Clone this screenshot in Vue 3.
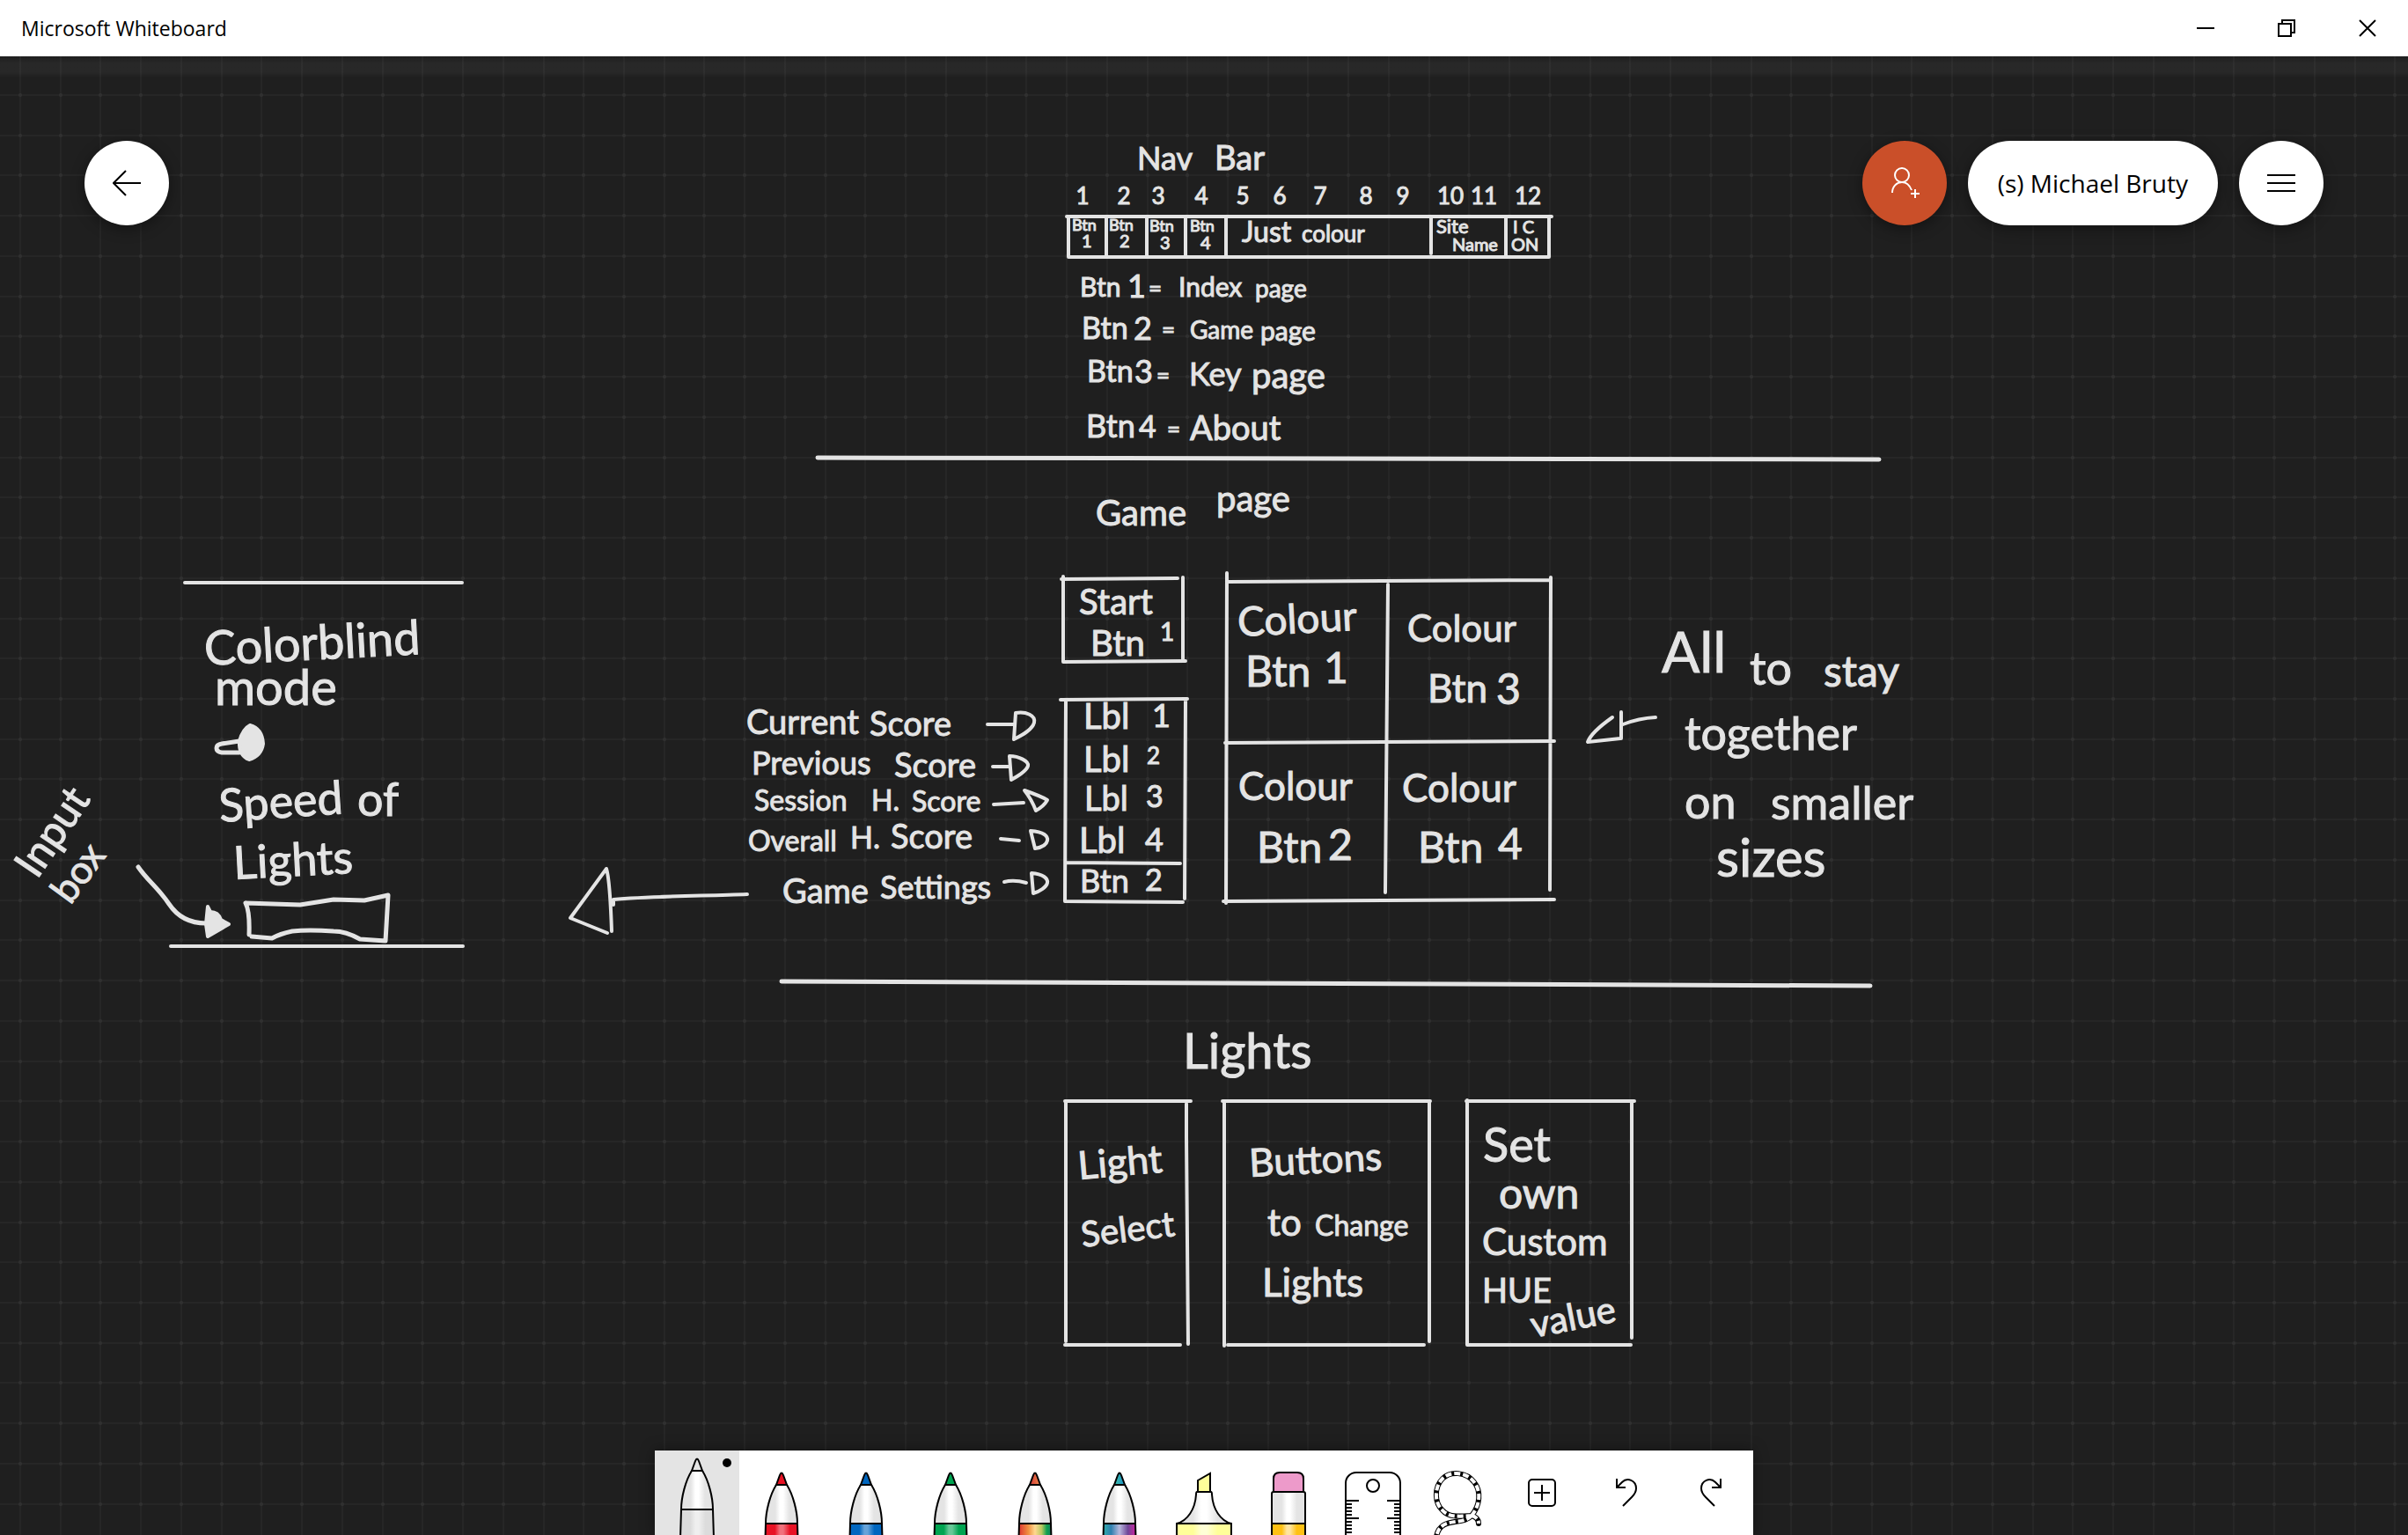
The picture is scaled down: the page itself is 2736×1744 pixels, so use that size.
<script setup>
// Background grid: 15 cells repeat every 686 units
const gridLines = Array.from({ length: 15 }, (_, i) => 11 + Math.round((i * 686) / 15))

// Ink words: [text, x, baseline, size, tilt]
const words = [
  ['Nav', 1292, 193, 36], ['Bar', 1380, 193, 38],
  ['Btn', 1218, 262, 18], ['1', 1229, 281, 20],
  ['Btn', 1260, 262, 18], ['2', 1272, 281, 20],
  ['Btn', 1306, 263, 18], ['3', 1318, 283, 20],
  ['Btn', 1352, 263, 18], ['4', 1364, 283, 20],
  ['Just', 1411, 275, 32], ['colour', 1479, 275, 26],
  ['Site', 1632, 265, 22], ['Name', 1650, 285, 20],
  ['I C', 1719, 265, 20], ['ON', 1717, 285, 20],

  ['Btn', 1227, 337, 30], ['1', 1281, 338, 36], ['=', 1305, 337, 26], ['Index', 1339, 337, 30], ['page', 1426, 338, 28],
  ['Btn', 1229, 385, 34], ['2', 1288, 386, 36], ['=', 1320, 384, 26], ['Game', 1352, 385, 28], ['page', 1432, 387, 30],
  ['Btn', 1235, 434, 34], ['3', 1289, 435, 36], ['=', 1314, 436, 26], ['Key', 1351, 438, 36], ['page', 1422, 441, 40],
  ['Btn', 1234, 497, 36], ['4', 1294, 497, 34], ['=', 1326, 497, 26], ['About', 1352, 500, 38],

  ['Game', 1245, 597, 40], ['page', 1382, 581, 40],

  ['Colorblind', 233, 756, 54, -3], ['mode', 244, 801, 56],
  ['Speed', 250, 934, 52, -4], ['of', 406, 927, 52],
  ['Lights', 266, 999, 52, -3],
  ['Input', 42, 1000, 48, -56], ['box', 80, 1029, 44, -54],

  ['Start', 1226, 698, 40], ['Btn', 1239, 745, 40], ['1', 1318, 728, 28],
  ['Lbl', 1231, 828, 40], ['1', 1309, 826, 36],
  ['Lbl', 1231, 877, 40], ['2', 1303, 868, 26],
  ['Lbl', 1232, 921, 38], ['3', 1302, 917, 34],
  ['Lbl', 1226, 969, 40], ['4', 1301, 967, 36],
  ['Btn', 1227, 1014, 36], ['2', 1301, 1012, 34],

  ['Current', 848, 834, 38], ['Score', 988, 836, 38],
  ['Previous', 854, 880, 36], ['Score', 1016, 883, 38],
  ['Session', 857, 921, 32], ['H.', 990, 921, 32], ['Score', 1036, 922, 32],
  ['Overall', 850, 967, 32], ['H.', 966, 964, 34], ['Score', 1012, 964, 38],
  ['Game', 889, 1026, 38], ['Settings', 1000, 1021, 36],

  ['Colour', 1407, 723, 46, -3], ['Btn', 1415, 780, 48], ['1', 1504, 776, 48],
  ['Colour', 1599, 729, 42], ['Btn', 1622, 798, 44], ['3', 1700, 800, 48],
  ['Colour', 1407, 909, 44], ['Btn', 1428, 980, 48], ['2', 1509, 977, 48],
  ['Colour', 1593, 911, 44], ['Btn', 1611, 980, 48], ['4', 1702, 976, 48],

  ['All', 1888, 764, 64], ['to', 1988, 778, 52], ['stay', 2072, 780, 48],
  ['together', 1914, 852, 52],
  ['on', 1914, 930, 52], ['smaller', 2012, 931, 52],
  ['sizes', 1950, 996, 60],

  ['Lights', 1344, 1214, 56],
  ['Light', 1226, 1340, 44, -5], ['Select', 1230, 1417, 40, -7],
  ['Buttons', 1420, 1337, 44, -3],
  ['to', 1440, 1404, 42], ['Change', 1494, 1404, 32],
  ['Lights', 1434, 1473, 44],
  ['Set', 1685, 1320, 54], ['own', 1703, 1373, 48],
  ['Custom', 1684, 1426, 42], ['HUE', 1684, 1480, 38],
  ['value', 1742, 1520, 42, -11]
]

const columns = [1230, 1277, 1316, 1365, 1412, 1454, 1500, 1552, 1594, 1648, 1686, 1736]

const pens = [
  { name: 'Black pen', top: 9, tip: '#e4e4e4', body: 'url(#body-grey)' },
  { name: 'Red pen', top: 25, tip: '#e81224', body: 'url(#body-red)' },
  { name: 'Blue pen', top: 25, tip: '#0066bf', body: 'url(#body-blue)' },
  { name: 'Green pen', top: 25, tip: '#00a451', body: 'url(#body-green)' },
  { name: 'Rainbow pen', top: 25, tip: 'url(#tip-rainbow)', body: 'url(#body-rainbow)' },
  { name: 'Galaxy pen', top: 25, tip: 'url(#tip-galaxy)', body: 'url(#body-galaxy)' }
]

const barrels = [
  { id: 'body-grey', edge: '#dcdcdc', mid: '#efefef' },
  { id: 'body-red', edge: '#e81224', mid: '#f1717c' },
  { id: 'body-blue', edge: '#0066bf', mid: '#66a3d9' },
  { id: 'body-green', edge: '#00a451', mid: '#66c897' },
  { id: 'body-yellow', edge: '#ffff99', mid: '#ffffd6' },
  { id: 'body-orange', edge: '#ffc114', mid: '#ffe5a0' },
  { id: 'metal', edge: '#e4e4e4', mid: '#ffffff' }
]

const ticks = [57, 61, 65, 69, 73, 77, 81, 85, 89, 93]
const tickLength = (y) => ((y - 57) % 20 === 0 ? 14 : 6)
</script>

<template>
  <div class="app">
    <header class="titlebar">
      <h1 class="title">Microsoft Whiteboard</h1>
      <div class="window-controls">
        <button type="button" class="window-button" aria-label="Minimize">
          <svg width="20" height="20" viewBox="0 0 20 20"><path d="M0 10H20" /></svg>
        </button>
        <button type="button" class="window-button" aria-label="Restore">
          <svg width="20" height="20" viewBox="0 0 20 20"><path d="M1 5H15V19H1ZM5 5V1H19V15H15" /></svg>
        </button>
        <button type="button" class="window-button" aria-label="Close">
          <svg width="20" height="20" viewBox="0 0 20 20"><path d="M1 1L19 19M19 1L1 19" /></svg>
        </button>
      </div>
    </header>

    <main class="board">
      <svg class="canvas" aria-label="Whiteboard canvas">
        <defs>
          <pattern id="grid" width="686" height="686" x="12" y="33" patternUnits="userSpaceOnUse">
            <g stroke="#262626" stroke-width="2">
              <line v-for="p in gridLines" :key="'v' + p" :x1="p" y1="0" :x2="p" y2="686" />
              <line v-for="p in gridLines" :key="'h' + p" x1="0" :y1="p" x2="686" :y2="p" />
            </g>
            <g fill="#303030">
              <template v-for="x in gridLines" :key="x">
                <circle v-for="y in gridLines" :key="y" :cx="x" :cy="y" r="2" />
              </template>
            </g>
          </pattern>
          <linearGradient id="band" x2="0" y2="1">
            <stop offset="0" stop-color="#fff" stop-opacity="0" />
            <stop offset=".35" stop-color="#fff" stop-opacity=".04" />
            <stop offset=".75" stop-color="#fff" stop-opacity=".04" />
            <stop offset="1" stop-color="#fff" stop-opacity="0" />
          </linearGradient>
        </defs>
        <rect width="100%" height="100%" fill="url(#grid)" />
        <rect width="100%" height="24" fill="url(#band)" />

        <g transform="translate(0 -64)">
          <g class="ink">
            <!-- nav bar -->
            <path d="M1212 246L1763 246M1214 246V292L1760 292V246M1257 248V291M1303 248V291M1347 248V291M1393 248V291M1626 248V288M1711 248V291" />
            <!-- dividers -->
            <path class="thick" d="M929 520L2135 522M888 1115L2125 1120" />
            <path d="M210 662L525 662M194 1075L526 1075" />
            <!-- start button -->
            <path d="M1206 658L1338 657M1208 655V752L1347 751M1344 656V750" />
            <!-- score labels -->
            <path d="M1205 795L1349 794M1211 796L1210 1024L1344 1025M1347 796L1346 1021M1212 980L1341 981" />
            <!-- colour buttons -->
            <path d="M1395 661L1761 659M1394 651L1393 1026M1577 664L1574 1014M1762 656L1761 1011M1392 844L1766 842M1390 1024L1766 1022" />
            <!-- lights columns -->
            <path d="M1210 1251H1353M1211 1252V1524M1348 1254V1292L1350 1527M1210 1528H1341" />
            <path d="M1389 1251H1625M1391 1252V1529M1624 1252V1524M1395 1528H1618" />
            <path d="M1666 1251H1857M1667 1250V1528H1853M1854 1252V1520" />
            <!-- arrows beside the scores -->
            <path d="M1122 823H1152M1154 810C1166 808 1177 813 1175 821S1162 835 1152 840Z" />
            <path d="M1128 871H1146M1147 859C1158 859 1169 865 1168 870S1158 881 1149 886Z" />
            <path d="M1129 914L1163 912M1164 898Q1184 905 1190 909Q1186 916 1177 921Q1172 908 1164 898Z" />
            <path d="M1137 953L1158 955M1171 944C1186 945 1191 950 1190 955S1183 963 1176 964Z" />
            <path d="M1141 1002Q1152 999 1166 1003M1172 992C1185 993 1191 998 1190 1003S1181 1013 1174 1015Z" />
            <path d="M849 1016C800 1018 740 1018 697 1022V1028M689 987L648 1043L690 1060M689 987Q693 1000 695 1058" />
            <!-- arrow to the colour buttons -->
            <path d="M1881 815Q1862 816 1844 823M1842 809V839M1832 815Q1808 832 1804 843L1841 839" />
            <!-- settings panel -->
            <path class="thick" d="M279 1026L341 1028L379 1022L414 1023L441 1017L438 1069L409 1067Q393 1058 379 1058Q350 1056 332 1058Q318 1061 309 1066L286 1064M279 1026Q284 1036 283 1062" />
            <path class="thick" d="M272 842L252 845Q246 846 246 850T252 855H272" />
            <path class="thick" d="M157 985C168 1001 180 1009 192 1027S220 1049 234 1049" />
            <path class="solid" d="M236 1030L239 1036Q248 1036 251 1045L260 1050L236 1064L234 1050Z" />
            <path class="solid" d="M284 824Q298 828 299 845Q297 859 283 863Q271 858 272 842Q276 828 284 824Z" />
          </g>

          <g class="ink-text">
            <text v-for="(x, i) in columns" :key="'c' + x" :x="x" y="232" font-size="26" text-anchor="middle">{{ i + 1 }}</text>
            <text
              v-for="([label, x, y, size, tilt], i) in words"
              :key="i"
              :x="x"
              :y="y"
              :font-size="size"
              :transform="tilt ? `rotate(${tilt} ${x} ${y})` : undefined"
            >{{ label }}</text>
          </g>
        </g>
      </svg>

      <nav class="top-controls">
        <button type="button" class="round" aria-label="Back">
          <svg width="32" height="32" viewBox="0 0 32 32"><path d="M32 16H1M15 2L1 16L15 30" /></svg>
        </button>
        <div class="account">
          <button type="button" class="round invite" aria-label="Invite someone">
            <svg width="36" height="40" viewBox="0 0 36 40">
              <circle cx="15" cy="11" r="8" />
              <path d="M4 31C4 24 9 19 15 19S24 23 26 28M30 27V37M25 32H35" />
            </svg>
          </button>
          <button type="button" class="round name">(s) Michael Bruty</button>
          <button type="button" class="round" aria-label="Menu">
            <svg width="32" height="32" viewBox="0 0 32 32"><path d="M0 7H32M0 16H32M0 25H32" /></svg>
          </button>
        </div>
      </nav>

      <div class="toolbar" role="toolbar" aria-label="Drawing tools">
        <svg class="defs" width="0" height="0" aria-hidden="true">
          <defs>
            <linearGradient v-for="b in barrels" :id="b.id" :key="b.id">
              <stop offset=".3" :stop-color="b.edge" />
              <stop offset=".45" :stop-color="b.mid" />
              <stop offset=".55" :stop-color="b.mid" />
              <stop offset=".75" :stop-color="b.edge" />
            </linearGradient>
            <linearGradient id="body-rainbow">
              <stop offset="0" stop-color="#dc3030" />
              <stop offset=".3" stop-color="#f09040" />
              <stop offset=".5" stop-color="#ffd890" />
              <stop offset=".7" stop-color="#b8c860" />
              <stop offset=".85" stop-color="#10a050" />
              <stop offset="1" stop-color="#108060" />
            </linearGradient>
            <linearGradient id="tip-rainbow">
              <stop offset="0" stop-color="#d03838" />
              <stop offset="1" stop-color="#f08848" />
            </linearGradient>
            <linearGradient id="body-galaxy">
              <stop offset="0" stop-color="#30b0a8" />
              <stop offset=".25" stop-color="#3080b0" />
              <stop offset=".5" stop-color="#b8b8dc" />
              <stop offset=".75" stop-color="#704898" />
              <stop offset="1" stop-color="#d020a0" />
            </linearGradient>
            <linearGradient id="tip-galaxy">
              <stop offset="0" stop-color="#40c0a8" />
              <stop offset="1" stop-color="#1890c8" />
            </linearGradient>
          </defs>
        </svg>

        <button
          v-for="(pen, i) in pens"
          :key="pen.name"
          type="button"
          class="tool"
          :class="{ selected: i === 0 }"
          :aria-label="pen.name"
        >
          <svg width="96" height="96" viewBox="0 0 96 96">
            <g :transform="`translate(0 ${pen.top - 9})`">
              <path :fill="pen.body" d="M30 67H66L67 100H29Z" />
              <path fill="url(#metal)" d="M42 23H54C61 34 66 53 66 67H30C30 53 35 34 42 23Z" />
              <path :fill="pen.tip" d="M42 23L46 12Q48 7 50 12L54 23Z" />
            </g>
            <circle v-if="i === 0" cx="82" cy="14" r="5" class="dot" />
          </svg>
        </button>

        <button type="button" class="tool" aria-label="Highlighter">
          <svg width="96" height="96" viewBox="0 0 96 96">
            <path fill="#ffff99" d="M41 48V34L55 26V48Z" />
            <path fill="url(#metal)" d="M40 47H56Q57 47 57 50C58 67 67 80 79 83H17C29 80 38 67 39 50Q39 47 40 47Z" />
            <path fill="url(#body-yellow)" d="M17 83H79V100H17Z" />
          </svg>
        </button>
        <button type="button" class="tool" aria-label="Eraser">
          <svg width="96" height="96" viewBox="0 0 96 96">
            <path fill="#ed9aca" d="M31 47V32Q31 25 38 25H58Q65 25 65 32V47Z" />
            <path fill="url(#metal)" d="M29 83V49Q29 47 31 47H65Q67 47 67 49V83Z" />
            <path fill="url(#body-orange)" d="M29 83H67V100H29Z" />
          </svg>
        </button>
        <button type="button" class="tool" aria-label="Ruler">
          <svg width="96" height="96" viewBox="0 0 96 96">
            <rect x="17" y="25" width="62" height="90" rx="12" />
            <circle cx="48" cy="40" r="7" />
            <path v-for="y in ticks" :key="y" :d="`M18 ${y}h${tickLength(y)}M78 ${y}h${-tickLength(y)}`" />
          </svg>
        </button>
        <button type="button" class="tool" aria-label="Lasso select">
          <svg width="96" height="96" viewBox="0 0 96 96">
            <g v-for="layer in ['rope', 'strand']" :key="layer" :class="layer">
              <path d="M64 74C74 62 75 46 67 36C58 24 40 23 31 32C21 42 22 60 31 68C38 76 49 75 64 74" />
              <path d="M64 74C54 86 28 74 24 98M64 74Q72 76 72 83" />
            </g>
          </svg>
        </button>
        <button type="button" class="tool" aria-label="Insert">
          <svg width="96" height="96" viewBox="0 0 96 96">
            <rect x="33" y="33" width="30" height="30" rx="4" /><path d="M48 39V57M39 48H57" />
          </svg>
        </button>
        <button type="button" class="tool" aria-label="Undo">
          <svg width="96" height="96" viewBox="0 0 96 96">
            <path d="M37 32V42H47M37 42L43 36C49 30 59 34 59 43C59 47 57 50 54 53L44 63" />
          </svg>
        </button>
        <button type="button" class="tool" aria-label="Redo">
          <svg width="96" height="96" viewBox="0 0 96 96">
            <path d="M59 32V42H49M59 42L53 36C47 30 37 34 37 43C37 47 39 50 42 53L52 63" />
          </svg>
        </button>
      </div>
    </main>
  </div>
</template>

<style>
body {
  margin: 0;
  background: #1f1f1f;
}
</style>

<style scoped>
.app {
  display: flex;
  flex-direction: column;
  min-height: 100vh;
  font-family: "Open Sans", "Noto Sans", sans-serif;
  color: #000;
}

button {
  display: flex;
  align-items: center;
  justify-content: center;
  margin: 0;
  padding: 0;
  border: 0;
  background: none;
  font: inherit;
  color: inherit;
}

svg {
  fill: none;
  stroke: currentColor;
  stroke-width: 2;
}

.titlebar {
  display: flex;
  align-items: center;
  justify-content: space-between;
  height: 64px;
  padding-left: 24px;
  background: #fff;
}

.title {
  margin: 0;
  font-size: 23px;
  line-height: 32px;
  font-weight: 400;
}

.window-controls {
  display: flex;
}

.window-button {
  width: 92px;
  height: 64px;
}

.board {
  position: relative;
  display: flex;
  flex: 1;
  flex-direction: column;
  justify-content: space-between;
  background: #1f1f1f;
  overflow: hidden;
}

.canvas {
  position: absolute;
  inset: 0;
  width: 100%;
  height: 100%;
  stroke: none;
}

.ink {
  fill: none;
  stroke: #e4e4e4;
  stroke-width: 4;
  stroke-linecap: round;
  stroke-linejoin: round;
}

.ink .thick {
  stroke-width: 5;
}

.ink .solid {
  fill: #e4e4e4;
}

.ink-text {
  fill: #e4e4e4;
  stroke: #e4e4e4;
  stroke-width: 1;
  font-family: Lato, "Open Sans", sans-serif;
}

.top-controls {
  position: relative;
  display: flex;
  justify-content: space-between;
  padding: 96px 96px 0;
}

.account {
  display: flex;
  gap: 24px;
}

.round {
  min-width: 96px;
  height: 96px;
  border-radius: 48px;
  background: #fff;
  box-shadow: 0 4px 16px rgba(0, 0, 0, 0.4);
}

.invite {
  background: #ca4f29;
  color: #fff;
}

.name {
  padding: 0 34px;
  font-size: 28px;
}

.toolbar {
  position: relative;
  display: flex;
  align-self: center;
  background: #fff;
  box-shadow: 0 0 16px rgba(0, 0, 0, 0.4);
}

.defs {
  position: absolute;
}

.tool {
  width: 96px;
  height: 96px;
}

.selected {
  background: #e4e4e4;
}

.dot {
  fill: #000;
  stroke: none;
}

.rope {
  stroke-width: 6;
  stroke-linecap: round;
}

.strand {
  stroke: #fff;
  stroke-width: 4;
  stroke-dasharray: 7 3;
}
</style>
